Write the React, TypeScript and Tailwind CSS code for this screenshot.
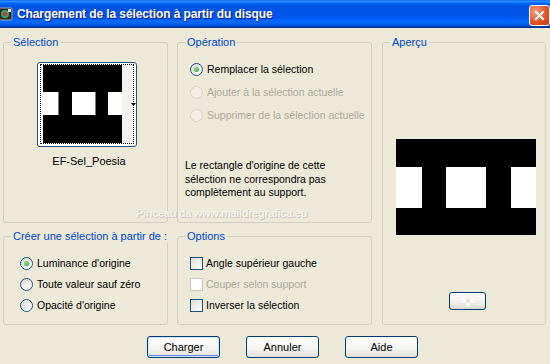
import React from 'react'

const font = "font-['Liberation_Sans',Arial,sans-serif]"

const Radio = ({ checked = false, disabled = false }: { checked?: boolean; disabled?: boolean }) => (
  <span
    className={`flex items-center justify-center w-[13px] h-[13px] rounded-full border shrink-0 ${
      disabled
        ? 'border-[#d6d3c6] bg-[#f1efe6]'
        : 'border-[#1c5180] bg-[linear-gradient(135deg,#d6d4cb,#ffffff_80%)]'
    }`}
  >
    {checked && <span className="w-[5px] h-[5px] rounded-full bg-[radial-gradient(circle_at_35%_35%,#8ee08e,#21a121)]" />}
  </span>
)

const Check = ({ disabled = false }: { disabled?: boolean }) => (
  <span
    className={`w-[13px] h-[13px] border shrink-0 ${
      disabled ? 'border-[#cac8bb] bg-white' : 'border-[#1c5180] bg-[linear-gradient(135deg,#dcdcd7,#ffffff)]'
    }`}
  />
)

const Group = ({ title, className = '', children }: { title: string; className?: string; children?: React.ReactNode }) => (
  <fieldset className={`border border-[#d0d0bf] rounded-[3px] m-0 p-0 min-w-0 ${className}`}>
    <legend className="ml-[7px] px-[2px] text-[#0046d5] text-[11px] leading-[13px] whitespace-nowrap">{title}</legend>
    {children}
  </fieldset>
)

const XpButton = ({ label, isDefault = false }: { label: string; isDefault?: boolean }) => (
  <button
    type="button"
    className={`w-[73px] h-[22px] rounded-[3px] border border-[#003c74] bg-[linear-gradient(180deg,#ffffff,#f3f3ef_60%,#e2e1d9)] text-black text-[11px] leading-none ${
      isDefault ? 'shadow-[inset_0_0_0_1px_#cee7ff,inset_0_-1px_0_1px_#6982ee]' : ''
    }`}
  >
    {label}
  </button>
)

export default function App() {
  return (
    <div className={`${font} w-[550px] h-[364px] bg-[#ece9d8] text-[10.5px] text-black overflow-hidden relative whitespace-nowrap`}>
      {/* Title bar */}
      <div className="h-[28px] flex items-center bg-[linear-gradient(180deg,#0058ee_0%,#3593ff_4%,#288eff_6%,#127dff_8%,#036ffc_10%,#0262ee_14%,#0057e5_20%,#0054e3_24%,#0055eb_56%,#005bf5_66%,#026afe_76%,#0062ef_86%,#0052d6_92%,#0040ab_94%,#003092_100%)]">
        <svg width="16" height="16" viewBox="0 0 16 16" className="ml-[-3px] shrink-0">
          <rect x="1" y="2" width="14" height="12" rx="1" fill="#2b2b2b" stroke="#9aa" strokeWidth="1" />
          <circle cx="8" cy="8" r="4" fill="#3a6" />
          <circle cx="8" cy="8" r="2" fill="#c33" />
          <rect x="11" y="3" width="3" height="3" fill="#eee" />
        </svg>
        <span className="ml-[4px] text-white font-bold text-[12px] tracking-[-0.1px] [text-shadow:1px_1px_0_#0a1883]">
          Chargement de la sélection à partir du disque
        </span>
        <div className="ml-auto mt-[2px] w-[21px] h-[21px] rounded-[3px] border border-white bg-[radial-gradient(circle_at_30%_30%,#f0a080,#e2552c_55%,#c33b14)] flex items-center justify-center">
          <svg width="11" height="11" viewBox="0 0 11 11">
            <path d="M2 2 L9 9 M9 2 L2 9" stroke="white" strokeWidth="2" strokeLinecap="square" />
          </svg>
        </div>
      </div>

      {/* Body */}
      <div className="pl-[3px] pt-[8px]">
        <div className="grid grid-cols-[165px_195px_165px] grid-rows-[187px_95px] gap-x-[9px] gap-y-[7px]">
          <Group title="Sélection">
            <div className="relative ml-[33px] mt-[13px] w-[100px] h-[85px] rounded-[3px] border border-[#1c5180] bg-white pt-[1px] pl-[2px]">
              <div className="w-[94px] h-[80px] border border-dotted border-black">
                <svg width="92" height="78" viewBox="0 0 92 78" className="block">
                  <rect width="92" height="78" fill="#ffffff" />
                  <rect x="81" width="11" height="78" fill="#f3f2ee" />
                  <rect x="2" y="0" width="79" height="27" fill="#000" />
                  <rect x="2" y="50" width="79" height="28" fill="#000" />
                  <rect x="17" y="27" width="14" height="23" fill="#000" />
                  <rect x="54" y="27" width="13" height="23" fill="#000" />
                  <rect x="17" y="27" width="1" height="23" fill="#777" />
                  <rect x="54" y="27" width="1" height="23" fill="#777" />
                </svg>
              </div>
              <svg width="5" height="3" viewBox="0 0 5 3" className="absolute left-[93px] top-[40px]">
                <path d="M0 0 H5 L2.5 3 Z" fill="#000" />
              </svg>
            </div>
            <div className="mt-[8px] pl-[7px] text-center text-[11px] leading-[13px]">EF-Sel_Poesia</div>
          </Group>

          <Group title="Opération">
            <div className="mt-[9px] pl-[12px]">
              <div className="h-[23px] flex items-center gap-[4px]">
                <Radio checked />
                <span>Remplacer la sélection</span>
              </div>
              <div className="h-[23px] flex items-center gap-[4px] text-[#aca899]">
                <Radio disabled />
                <span>Ajouter à la sélection actuelle</span>
              </div>
              <div className="h-[23px] flex items-center gap-[4px] text-[#aca899]">
                <Radio disabled />
                <span>Supprimer de la sélection actuelle</span>
              </div>
            </div>
            <p className="mt-[32px] pl-[7px] leading-[13.5px]">
              Le rectangle d'origine de cette
              <br />
              sélection ne correspondra pas
              <br />
              complètement au support.
            </p>
          </Group>

          <Group title="Aperçu" className="col-start-3 row-start-1 row-span-2 ml-px w-[164px]">
            <svg width="140" height="96" viewBox="0 0 140 96" className="block ml-[13px] mt-[90px]">
              <rect width="140" height="96" fill="#000" />
              <rect x="0" y="28" width="26" height="41" fill="#fff" />
              <rect x="50" y="28" width="40" height="41" fill="#fff" />
              <rect x="115" y="28" width="25" height="41" fill="#fff" />
            </svg>
            <div className="ml-[66px] mt-[57px] w-[37px] h-[18px] rounded-[3px] border border-[#003c74] bg-[linear-gradient(180deg,#ffffff,#ecebe6_70%,#d8d6cc)] flex items-end justify-center pb-[2px]">
              <div className="grid grid-cols-[4px_4px_4px] grid-rows-[4px_4px]">
                <span className="bg-[#fdfdfd]" />
                <span className="bg-[#e4e3dc]" />
                <span className="bg-[#fdfdfd]" />
                <span className="bg-[#e4e3dc]" />
                <span className="bg-[#fdfdfd]" />
                <span className="bg-[#e4e3dc]" />
              </div>
            </div>
          </Group>

          <Group title="Créer une sélection à partir de :">
            <div className="mt-[10px] pl-[16px]">
              <div className="h-[21px] flex items-center gap-[4px]">
                <Radio checked />
                <span>Luminance d'origine</span>
              </div>
              <div className="h-[21px] flex items-center gap-[4px]">
                <Radio />
                <span>Toute valeur sauf zéro</span>
              </div>
              <div className="h-[21px] flex items-center gap-[4px]">
                <Radio />
                <span>Opacité d'origine</span>
              </div>
            </div>
          </Group>

          <Group title="Options">
            <div className="mt-[10px] pl-[12px]">
              <div className="h-[21px] flex items-center gap-[3px]">
                <Check />
                <span>Angle supérieur gauche</span>
              </div>
              <div className="h-[21px] flex items-center gap-[3px] text-[#aca899]">
                <Check disabled />
                <span>Couper selon support</span>
              </div>
              <div className="h-[21px] flex items-center gap-[3px]">
                <Check />
                <span>Inverser la sélection</span>
              </div>
            </div>
          </Group>
        </div>

        <div className="mt-[11px] ml-[144px] flex gap-[26px]">
          <XpButton label="Charger" isDefault />
          <XpButton label="Annuler" />
          <XpButton label="Aide" />
        </div>
      </div>

      {/* watermark */}
      <div className="absolute left-[136px] top-[205px] font-bold text-[11px] tracking-[-0.3px] text-[#f4f3ec] [text-shadow:1px_1px_0_#c9c6b8] pointer-events-none">
        Pinceau da www.maildregrafica.eu
      </div>
    </div>
  )
}
